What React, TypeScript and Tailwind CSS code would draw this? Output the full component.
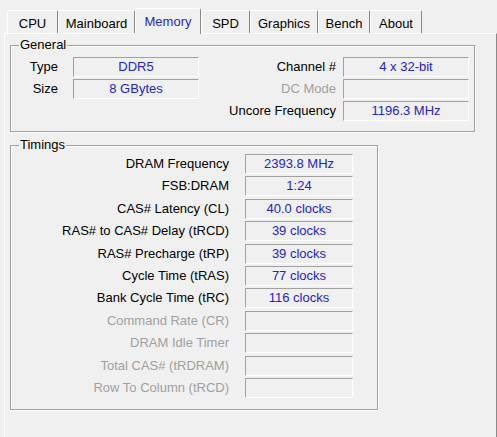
import React from 'react';

const TABS = [
  { name: 'CPU', w: 'w-[51px]' },
  { name: 'Mainboard', w: 'w-[77px]' },
  { name: 'Memory', w: 'w-[66px]', active: true },
  { name: 'SPD', w: 'w-[49px]' },
  { name: 'Graphics', w: 'w-[68px]' },
  { name: 'Bench', w: 'w-[52px]' },
  { name: 'About', w: 'w-[52px]' },
];

const TIMINGS = [
  { label: 'DRAM Frequency', value: '2393.8 MHz' },
  { label: 'FSB:DRAM', value: '1:24' },
  { label: 'CAS# Latency (CL)', value: '40.0 clocks' },
  { label: 'RAS# to CAS# Delay (tRCD)', value: '39 clocks' },
  { label: 'RAS# Precharge (tRP)', value: '39 clocks' },
  { label: 'Cycle Time (tRAS)', value: '77 clocks' },
  { label: 'Bank Cycle Time (tRC)', value: '116 clocks' },
  { label: 'Command Rate (CR)', value: '', disabled: true },
  { label: 'DRAM Idle Timer', value: '', disabled: true },
  { label: 'Total CAS# (tRDRAM)', value: '', disabled: true },
  { label: 'Row To Column (tRCD)', value: '', disabled: true },
];

function Field({ value, width }: { value: string; width: string }) {
  return (
    <div
      className={`${width} h-[20px] shrink-0 flex items-center justify-center border-t border-l border-[#a0a0a0] border-r border-b border-r-white border-b-white text-[#2424c4] whitespace-nowrap`}
    >
      {value}
    </div>
  );
}

function Group({
  title,
  className,
  children,
}: {
  title: string;
  className: string;
  children: React.ReactNode;
}) {
  return (
    <div
      className={`relative border border-[#a0a0a0] shadow-[inset_1px_1px_0_#ffffff,1px_1px_0_#ffffff] ${className}`}
    >
      <span className="absolute left-[8px] top-[-9px] px-[1px] bg-[#f0f0f0] leading-[16px] text-black">
        {title}
      </span>
      {children}
    </div>
  );
}

export default function App() {
  return (
    <div className="w-[497px] h-[437px] overflow-hidden bg-[#f0f0f0] pt-[8px] text-[13px] leading-[16px] text-black font-['Liberation_Sans',Arial,sans-serif]">
      {/* tabs */}
      <div className="flex items-end h-[25px] pl-[7px]">
        {TABS.map((t) =>
          t.active ? (
            <div
              key={t.name}
              className={`${t.w} h-[26px] -mb-[1px] relative z-10 bg-[#f0f0f0] border-t border-l border-white border-r border-r-[#888888] rounded-t-[2px] flex justify-center pt-[5px] text-[#2a2ab8]`}
            >
              {t.name}
            </div>
          ) : (
            <div
              key={t.name}
              className={`${t.w} h-[23px] border-t border-l border-white border-r border-r-[#888888] rounded-t-[2px] flex justify-center pt-[5px]`}
            >
              {t.name}
            </div>
          ),
        )}
      </div>

      {/* page */}
      <div className="ml-[4px] w-[493px] h-[420px] border-t border-l border-white border-r border-r-[#8a8a8a] pl-[5px] pt-[11px]">
        <Group title="General" className="w-[465px] h-[87px] pt-[11px]">
          <div className="flex flex-col gap-[2px]">
            <div className="flex items-center">
              <div className="w-[47px] text-right">Type</div>
              <div className="w-[15px]" />
              <Field value="DDR5" width="w-[126px]" />
              <div className="w-[137px] text-right">Channel #</div>
              <div className="w-[7px]" />
              <Field value="4 x 32-bit" width="w-[126px]" />
            </div>
            <div className="flex items-center">
              <div className="w-[47px] text-right">Size</div>
              <div className="w-[15px]" />
              <Field value="8 GBytes" width="w-[126px]" />
              <div className="w-[137px] text-right text-[#a0a0a0]">DC Mode</div>
              <div className="w-[7px]" />
              <Field value="" width="w-[126px]" />
            </div>
            <div className="flex items-center">
              <div className="w-[188px]" />
              <div className="w-[137px] text-right">Uncore Frequency</div>
              <div className="w-[7px]" />
              <Field value="1196.3 MHz" width="w-[126px]" />
            </div>
          </div>
        </Group>

        <Group title="Timings" className="mt-[13px] w-[368px] h-[265px] pt-[8px]">
          <div className="flex flex-col gap-[2.4px]">
            {TIMINGS.map((r) => (
              <div key={r.label} className="flex items-center">
                <div
                  className={`w-[218px] text-right whitespace-nowrap ${r.disabled ? 'text-[#a0a0a0]' : ''}`}
                >
                  {r.label}
                </div>
                <div className="w-[16px]" />
                <Field value={r.value} width="w-[108px]" />
              </div>
            ))}
          </div>
        </Group>
      </div>
    </div>
  );
}
